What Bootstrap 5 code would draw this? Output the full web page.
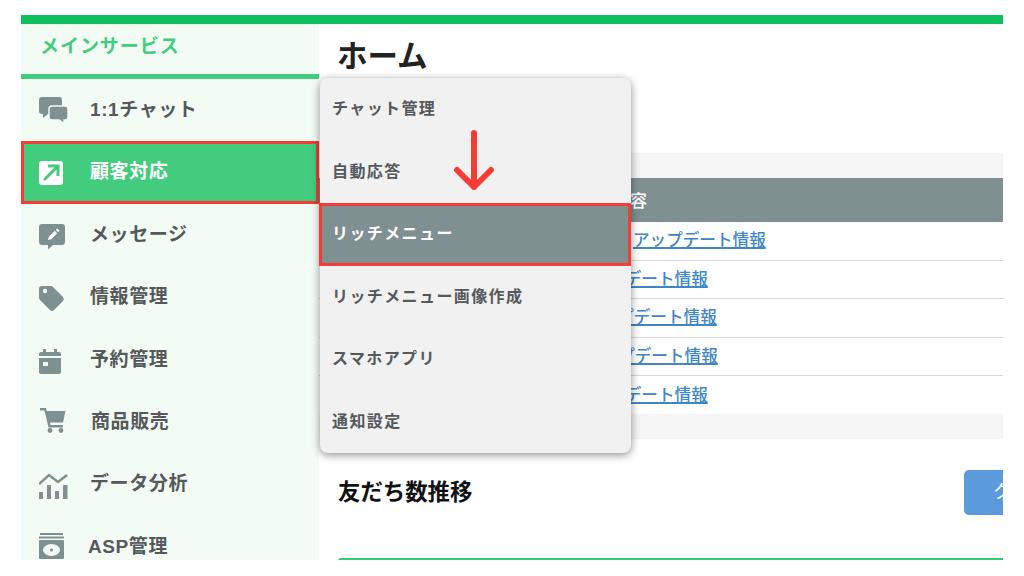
<!DOCTYPE html>
<html lang="ja">
<head>
<meta charset="utf-8">
<title>ホーム</title>
<link rel="stylesheet" href="https://cdn.jsdelivr.net/npm/bootstrap@5.3.0/dist/css/bootstrap.min.css">
<style>
html,body{height:100%;overflow:hidden;background:#fff}
body{font-family:"Liberation Sans","Noto Sans CJK JP",sans-serif;padding:15px 21px 16px}
.frame{height:545px;overflow:hidden;position:relative;border-top:9px solid #0cc15d}
.side{width:298px;flex:none;background:#f3fbf5}
.side-head{height:55px;border-bottom:5px solid #44cc7e;padding:10px 0 0 19px;color:#44cc7e;font-size:19px;font-weight:700;letter-spacing:.95px;line-height:26px}
.side-row{height:62.4px;display:flex;align-items:center;color:#55595c;font-size:19px;font-weight:700;letter-spacing:.6px;padding-left:18px}
.side-row svg{width:32px;height:32px;flex:none;margin-right:19px;fill:#7f9091}
.side-row.on{background:#44cc7e;color:#fff;outline:3px solid #f53b35;outline-offset:-3px}
.shift-r{margin-left:1px}.shift-l{margin-left:-2px}
.main-area{flex:1;min-width:0}
.page-title{height:129px;padding:12px 0 0 18px;margin:0;font-size:30.5px;font-weight:700;color:#222;line-height:40px}
.news{background:#f5f5f5;padding:25px 0;height:286px}
.news table{margin:0;table-layout:fixed;--bs-table-bg:#fff}
.news th{background:#7f9091;color:#fff;height:44px;font-size:17px;font-weight:500;line-height:24px;padding:12px 0 8px;border:0;vertical-align:middle}
.news td{height:38.4px;padding:1px 0 0;font-size:16.6px;font-weight:500;line-height:34px;border-bottom:1.5px solid #d6d8d8;vertical-align:middle;white-space:nowrap;overflow:hidden}
.news tr:last-child td{border-bottom:0}
.news a{color:#3f86c6;text-decoration-thickness:1.5px}
.c-date{width:200px}
.head-cell{padding-left:94px!important}
.o1{padding-left:114px!important}.o2{padding-left:56px!important}.o3{padding-left:65px!important}.o4{padding-left:66px!important}.o5{padding-left:56px!important}
.chart-head{height:119px;padding:31px 0 0 19px}
.chart-head h2{font-size:22.4px;font-weight:700;color:#111;margin:8px 0 0;line-height:30px}
.go-btn{width:39px;height:45px;padding:0 0 0 29px;border:0;border-radius:5px 0 0 5px;background:#5b9bdd;color:#fff;font-size:18px;line-height:45px;white-space:nowrap;overflow:hidden;text-align:left}
.chart-card{margin-left:19px;border:0;border-top:2px solid #31cc73;border-radius:3px 0 0 0;height:10px}
.flyout{position:absolute;left:299px;top:54px;width:311px;height:375px;background:#f1f1f1;border-radius:8px;box-shadow:0 2px 8px rgba(0,0,0,.45);z-index:5}
.fly-item{height:62.5px;display:flex;align-items:center;padding-left:12px;color:#55595c;font-size:16px;font-weight:700;letter-spacing:1.4px;text-decoration:none}
.fly-item.on{background:#7f9091;color:#fff;outline:3px solid #f53b35;outline-offset:-3px;margin-left:-1px;padding-left:13px}
.arrow{position:absolute;left:132px;top:52px;width:44px;height:60px;fill:none;stroke:#f93c33;stroke-width:6;stroke-linecap:round;stroke-linejoin:round}
</style>
</head>
<body>
<div class="frame d-flex">
  <nav class="side">
    <div class="side-head">メインサービス</div>
    <div class="side-row"><svg viewBox="0 0 32 32"><path d="M3 3h17a3 3 0 0 1 3 3v11a3 3 0 0 1-3 3H9l-5 4v-4H3a3 3 0 0 1-3-3V6a3 3 0 0 1 3-3z"/><path stroke="#f3fbf5" stroke-width="1.4" d="M13 12h13a3 3 0 0 1 3 3v8a3 3 0 0 1-3 3h-1v3.500L20 26h-7a3 3 0 0 1-3-3v-8a3 3 0 0 1 3-3z"/></svg><span>1:1チャット</span></div>
    <div class="side-row on"><svg viewBox="0 0 32 32"><path fill="#fff" d="M3 4h18a3 3 0 0 1 3 3v18a3 3 0 0 1-3 3H3a3 3 0 0 1-3-3V7a3 3 0 0 1 3-3z"/><path fill="none" stroke="#44cc7e" stroke-width="3" d="M5 23 18 10M9 9h10v10"/></svg><span>顧客対応</span></div>
    <div class="side-row"><svg viewBox="0 0 32 32"><path d="M3 5h20a3 3 0 0 1 3 3v15a3 3 0 0 1-3 3H14l-5 4.500V26H3a3 3 0 0 1-3-3V8a3 3 0 0 1 3-3z"/><path fill="#fff" d="m9 21 .8-3.200 6-6 2.400 2.400-6 6zM16.800 10.800l1.400-1.400 2.400 2.400-1.400 1.400z"/></svg><span>メッセージ</span></div>
    <div class="side-row"><svg viewBox="0 0 32 32"><path d="M3 5h9a3 3 0 0 1 2 1l10 10a3 3 0 0 1 0 4l-9 9a3 3 0 0 1-4 0L1 19a3 3 0 0 1-1-2V8a3 3 0 0 1 3-3z"/><circle cx="6" cy="10" r="2.200" fill="#f3fbf5"/></svg><span>情報管理</span></div>
    <div class="side-row"><svg viewBox="0 0 32 32"><path d="M4 5h3v3h8V5h3v3h2a2 2 0 0 1 2 2v2H0v-2a2 2 0 0 1 2-2h2zM0 14h22v14a2 2 0 0 1-2 2H2a2 2 0 0 1-2-2z"/><rect x="4" y="18" width="5" height="4" fill="#f3fbf5"/></svg><span>予約管理</span></div>
    <div class="side-row"><svg viewBox="0 0 32 32"><path d="M1 2h6l.8 3H26.500l-2.500 11.500H11l.5 2.500H24v2.500H9.500L5.500 4.500H1z"/><circle cx="11" cy="24.500" r="2.400"/><circle cx="22" cy="24.500" r="2.400"/></svg><span class="shift-r">商品販売</span></div>
    <div class="side-row"><svg viewBox="0 0 32 32"><rect x="0" y="23" width="4" height="7" rx=".5"/><rect x="8" y="16" width="4" height="14" rx=".5"/><rect x="16" y="22" width="4" height="8" rx=".5"/><rect x="24" y="16" width="4.500" height="14" rx=".5"/><path fill="none" stroke="#7f9091" stroke-width="2.400" d="m0 15 10-9 9 7 9-7"/></svg><span>データ分析</span></div>
    <div class="side-row"><svg viewBox="0 0 32 32"><rect x="1" y="2" width="23" height="2"/><rect x="0" y="5.500" width="25" height="2"/><path d="M1 9h23a1 1 0 0 1 1 1v17a1 1 0 0 1-1 1H1a1 1 0 0 1-1-1V10a1 1 0 0 1 1-1z"/><ellipse cx="12.500" cy="19" rx="8.500" ry="6" fill="#f3fbf5"/><circle cx="12.500" cy="19" r="1.500"/></svg><span class="shift-l">ASP管理</span></div>
  </nav>
  <main class="main-area">
    <h1 class="page-title">ホーム</h1>
    <section class="news">
      <table class="table">
        <thead><tr><th class="c-date"></th><th class="head-cell">内容</th></tr></thead>
        <tbody>
          <tr><td></td><td class="o1"><a href="#">アップデート情報</a></td></tr>
          <tr><td></td><td class="o2"><a href="#">アップデート情報</a></td></tr>
          <tr><td></td><td class="o3"><a href="#">アップデート情報</a></td></tr>
          <tr><td></td><td class="o4"><a href="#">アップデート情報</a></td></tr>
          <tr><td></td><td class="o5"><a href="#">アップデート情報</a></td></tr>
        </tbody>
      </table>
    </section>
    <div class="chart-head d-flex justify-content-between align-items-start">
      <h2>友だち数推移</h2>
      <button class="btn go-btn" type="button">ク</button>
    </div>
    <div class="card chart-card"></div>
  </main>
  <div class="flyout">
    <a class="fly-item" href="#">チャット管理</a>
    <a class="fly-item" href="#">自動応答</a>
    <a class="fly-item on" href="#">リッチメニュー</a>
    <a class="fly-item" href="#">リッチメニュー画像作成</a>
    <a class="fly-item" href="#">スマホアプリ</a>
    <a class="fly-item" href="#">通知設定</a>
    <svg class="arrow" viewBox="0 0 44 60"><path d="M22 3v54M5 40l17 17 17-17"/></svg>
  </div>
</div>
</body>
</html>
